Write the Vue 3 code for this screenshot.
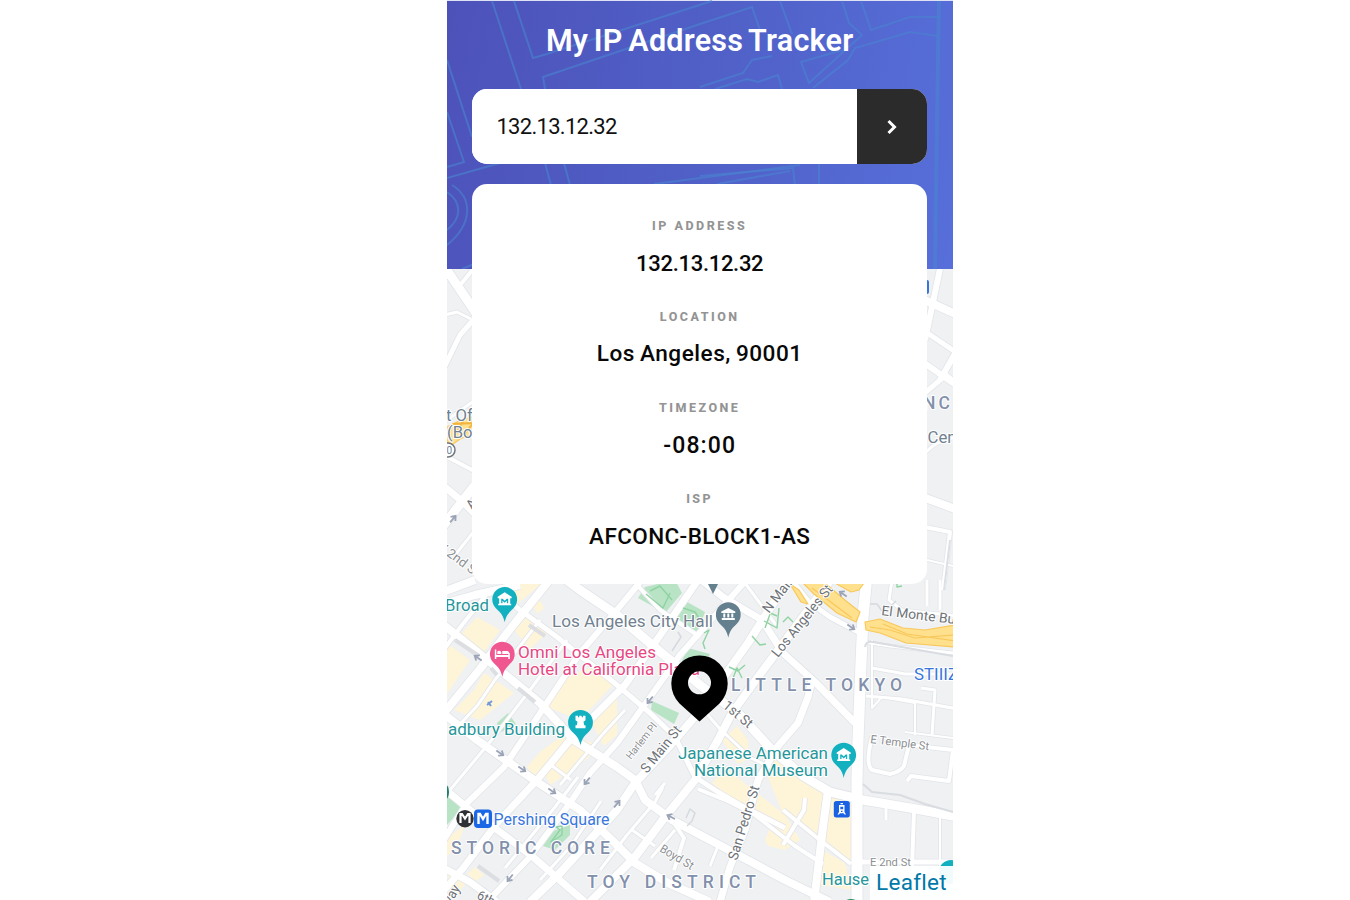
<script setup>
const details = [
  { label: 'IP ADDRESS', value: '132.13.12.32', key: 'ip' },
  { label: 'LOCATION', value: 'Los Angeles, 90001', key: 'loc' },
  { label: 'TIMEZONE', value: '-08:00', key: 'tz' },
  { label: 'ISP', value: 'AFCONC-BLOCK1-AS', key: 'isp' },
]

const headerLines = [
  'M492 1L521 89', 'M514 1L533 58L547 54L712 1', 'M545 89L543 77L700 24L752 7L760 30',
  'M447 60L472 137', 'M447 112L464 162L447 167', 'M447 178L500 163', 'M545 163L551 185', 'M564 163L570 185',
  'M654 184L800 165', 'M780 1L792 34', 'M700 87L743 73L752 60L772 56', 'M715 89L747 79L758 82L778 75L782 89',
  'M842 1L849 23L862 35L809 83L801 62L843 50', 'M861 1L871 30L910 17L939 17',
  'M813 88L848 60L855 48L910 32L938 36', 'M700 176L793 168L795 185', 'M717 184L790 171', 'M819 163V185',
  'M447 192C462 202 462 218 447 230', 'M452 185C473 198 473 224 447 245', 'M462 269L474 264',
]

const roads = [
  ['M430 730L480 669L507 633L556 572', 8], ['M440 846L467 803L504 767L527 733L580 653L617 610L650 570', 6],
  ['M440 895L464 867L497 823L537 780L570 740L625 685L652 647L698 580', 7],
  ['M487 902L530 857L570 803L590 773L617 743L648 700L680 655L718 612L748 578', 6],
  ['M530 902L560 873L590 840L617 810L635 783L675 740L698 713L748 643L788 580', 8],
  ['M590 902L635 857L665 817L695 780L718 740L732 713L758 677L785 641L832 578', 8],
  ['M720 902L730 867L745 830L758 780L778 746L798 723L808 697L812 680', 7],
  ['M828 790L823 827L814 902', 8], ['M867 575L863 617L861 663L858 740L857 780V902', 11],
  ['M556 572L580 590L617 615L658 650L700 685L740 715L770 748L803 776L830 792L863 800L916 809L958 817', 9],
  ['M500 594L520 610L557 637L617 685L650 713L675 737L695 777L718 792L740 805L785 828', 5],
  ['M440 622L490 662L540 703L574 740L617 767L635 780L645 800L672 820L725 848L785 880L830 902', 8],
  ['M440 711L477 740L537 782L580 810L617 845L635 863L668 883L710 902', 8],
  ['M440 785L470 810L507 837L533 857L585 902', 7], ['M440 866L470 882L497 902', 7],
  ['M628 575L660 610L700 637', 4], ['M695 575L723 597L762 620L783 653L816 683L858 726', 7],
  ['M790 578L809 602L830 617L864 635', 5], ['M440 605L475 595L520 585', 8],
  ['M440 655L462 625L490 590', 4], ['M540 620L517 650L495 680L477 706L450 735', 3],
  ['M567 640L530 690L490 742L450 790', 3], ['M560 785L602 735L625 710', 3], ['M505 868L555 807L578 777', 3],
  ['M540 880L571 846L601 801', 3], ['M600 870L627 835L655 802L663 787', 3], ['M551 765L571 780', 3],
  ['M864 642L890 646L953 653', 3], ['M872 668L905 674L958 674', 3], ['M866 696L902 699L958 709', 3],
  ['M872 640V708L882 697L915 703V735', 2], ['M921 688L935 690L932 735', 3], ['M905 732L953 738', 2],
  ['M872 737Q865 764 872 770L890 774Q900 772 904 766L909 745L953 750L949 781L911 776L907 781', 4],
  ['M886 804V820', 3], ['M914 811L912 868', 4], ['M940 816V868', 2], ['M857 862H953', 5],
  ['M783 810L820 840L851 864', 4], ['M783 845L804 810L805 798', 4], ['M698 789L730 802L755 815L795 846L823 864', 4],
  ['M672 820L684 838L674 870', 4], ['M684 828L718 846L710 866', 3], ['M651 858L675 830', 3],
  ['M655 795L665 783', 3], ['M632 830L655 846', 3], ['M745 583L776 625', 3], ['M695 700L720 729L751 758L782 773', 3],
  ['M440 260L478 316', 9], ['M461 284L475 267', 4], ['M440 376L460 335L475 318', 5],
  ['M440 316L457 312L471 319', 3], ['M440 425L475 400', 3], ['M440 483L463 502L475 514', 7],
  ['M440 530L475 485', 9], ['M440 453L478 473', 4], ['M455 555L475 530', 3], ['M440 593L475 580', 8],
  ['M925 340L940 269', 6], ['M920 298L960 316', 8], ['M920 328L960 355', 5], ['M940 380L960 345', 6],
  ['M920 360L960 388', 6], ['M920 397L946 375L958 385', 5], ['M926 452Q937 440 957 437', 3],
  ['M920 496L958 510', 8], ['M920 526L950 532L943 590', 4],
  ['M927 560L953 566', 2], ['M892 580L889 600L902 610L958 616', 3], ['M927 580V606', 3], ['M940 580V610', 3],
]

const yellow = [
  '460,635 477,617 500,630 484,652', '500,584 541,584 514,607 498,594', '447,643 470,660 447,694',
  '514,630 524,616 547,633 530,649', '474,690 484,673 514,693 480,720 454,710', '544,706 564,677 590,668 614,684 580,720',
  '590,720 617,697 617,735 604,746', '527,767 540,752 563,735 594,743 594,753 564,777 557,770 537,783',
  '712,783 725,768 785,815 800,840 785,850 768,846 765,840 772,823 752,818 735,803',
  '722,740 737,726 748,740 748,759 738,764', '763,764 783,759 826,793 816,837 783,815',
  '829,793 854,797 851,860 825,848', '824,851 845,863 853,890 820,885', '447,838 465,825 457,847 447,856',
  '448,870 466,884 450,900 447,900', '467,874 475,867 484,875 476,881', '545,773 552,767 562,777 550,785',
  '533,605 540,600 544,608 537,614',
]
const green = [
  '645,587 675,580 682,593 665,613 638,598', '680,598 705,612 696,637 673,620', '688,648 710,654 704,670 680,665',
  '652,701 679,713 674,724 651,710', '447,796 462,808 447,825', '543,846 553,831 570,825 570,835 555,850',
  '497,723 508,713 516,724 499,733', '447,827 455,829 447,838',
]

const labels = [
  { t: 'Broad', x: 445, y: 611, w: 44, s: 16.5, c: 'teal' },
  { t: 'Los Angeles City Hall', x: 552, y: 627, w: 161, s: 16.5, c: 'slate' },
  { t: 'Omni Los Angeles', x: 518, y: 657.5, w: 138, s: 16.5, c: 'pink' },
  { t: 'Hotel at California Plaza', x: 518, y: 674.5, w: 182, s: 16.5, c: 'pink' },
  { t: 'adbury Building', x: 448, y: 734.5, w: 117, s: 16.5, c: 'teal' },
  { t: 'Japanese American', x: 678, y: 759, w: 150, s: 16.5, c: 'teal' },
  { t: 'National Museum', x: 694, y: 776, w: 134, s: 16.5, c: 'teal' },
  { t: 'Pershing Square', x: 493.5, y: 824.5, w: 116, s: 16, c: 'blue' },
  { t: 'STIIIZ', x: 914, y: 679.5, w: 44, s: 17, c: 'blue' },
  { t: 'Hause', x: 822, y: 884.5, w: 47, s: 16, c: 'teal' },
  { t: 'LITTLE TOKYO', x: 731, y: 690.5, w: 171, s: 17.5, c: 'area' },
  { t: 'STORIC CORE', x: 451, y: 854, w: 159, s: 17.5, c: 'area' },
  { t: 'TOY DISTRICT', x: 587, y: 888, w: 169, s: 17.5, c: 'area' },
  { t: 'NC', x: 923, y: 408.5, w: 27, s: 17.5, c: 'area' },
  { t: 'Center', x: 927.5, y: 442.5, w: 49, s: 16, c: 'slate' },
  { t: 't Office', x: 446, y: 420.5, w: 53, s: 16, c: 'slate' },
  { t: '(Bow', x: 447, y: 437.5, w: 38, s: 16, c: 'slate' },
  { t: 'N Main', x: 769, y: 614, w: 43, s: 14, c: 'street', r: -52 },
  { t: 'Los Angeles St', x: 778, y: 658, w: 88, s: 14, c: 'street', r: -51 },
  { t: 'S Main St', x: 647, y: 774, w: 56, s: 14, c: 'street', r: -51 },
  { t: 'Harlem Pl', x: 631, y: 760, w: 43, s: 10.5, c: 'faint', r: -52 },
  { t: '1st St', x: 722, y: 707, w: 34, s: 14, c: 'street', r: 40 },
  { t: 'San Pedro St', x: 737, y: 861, w: 77, s: 14, c: 'street', r: -73 },
  { t: 'Boyd St', x: 659, y: 851, w: 37, s: 12, c: 'faint', r: 31 },
  { t: 'El Monte Busway', x: 881, y: 615, w: 106, s: 13.5, c: 'street', r: 7 },
  { t: 'E Temple St', x: 870, y: 743, w: 59, s: 11.5, c: 'faint', r: 7 },
  { t: 'E 2nd St', x: 870, y: 866, w: 41, s: 11.5, c: 'faint', r: 0 },
  { t: '6th', x: 476, y: 898, w: 18, s: 13, c: 'street', r: 27 },
  { t: 'way', x: 449, y: 908, w: 23, s: 14, c: 'street', r: -60 },
  { t: 'W 2nd St', x: 434, y: 546, w: 52, s: 13, c: 'faint', r: 37 },
  { t: 'A', x: 472, y: 510, w: 9, s: 13, c: 'street', r: -51 },
]
const arrows = [
  [478, 658, 215], [500, 753, 35], [522, 769, 35], [552, 791, 35], [587, 781, 128], [510, 878, 128],
  [671, 817, 207], [650, 700, 128], [843, 594, 215], [851, 627, 35], [453, 519, -50], [617, 804, -50],
]
</script>

<template>
  <main class="tracker">
    <header class="hero">
      <svg class="hero-art" viewBox="447 0 506 269" aria-hidden="true">
        <path v-for="(d, i) in headerLines" :key="i" :d="d" />
        <path class="wide" d="M939 1L937 120L935 269" />
      </svg>
      <h1>My IP Address Tracker</h1>
      <form class="search" @submit.prevent>
        <input value="132.13.12.32" aria-label="IP address" />
        <button aria-label="Search">
          <svg width="12" height="16" viewBox="0 0 12 16"><path d="M2.5 2L8.5 8L2.5 14" /></svg>
        </button>
      </form>
    </header>

    <section class="card">
      <div v-for="d in details" :key="d.key" class="item" :class="d.key">
        <h2><span>{{ d.label }}</span></h2>
        <p><span>{{ d.value }}</span></p>
      </div>
    </section>

    <section class="map">
      <svg class="canvas" viewBox="447 269 506 631">
        <defs>
          <path id="pin" d="M0 23C-1.5 16 -3.5 14 -9 8.6A12.4 12.4 0 1 1 9 8.6C3.5 14 1.5 16 0 23Z" />
          <g id="museum" fill="#fff">
            <path fill-rule="evenodd" d="M-7-2.5L0-7L7-2.5V-1H-7ZM-5.5-1H5.5V5H-5.5ZM-3.5 4V-.5H-2L0 1.5L2-.5H3.5V4H2.2V1.5L0 3.5L-2.2 1.5V4Z" />
            <path d="M-6.5 4.5H6.5V6H-6.5Z" />
          </g>
        </defs>
        <rect x="447" y="269" width="506" height="631" fill="#eff1f3" />
        <polygon v-for="(p, i) in yellow" :key="'y' + i" :points="p" fill="#fef4d8" />
        <polygon v-for="(p, i) in green" :key="'g' + i" :points="p" fill="#b9e3c5" />
        <g fill="none" stroke-linejoin="round">
          <path v-for="([d, w], i) in roads" :key="'e' + i" :d="d" stroke="#e2e5e9" :stroke-width="w + 1.6" />
          <path v-for="([d, w], i) in roads" :key="'r' + i" :d="d" stroke="#fff" :stroke-width="w" />
          <path d="M865 647Q866 641 873 642L953 656M863 784L872 792L900 795L925 804L953 812" stroke="#d9dce0" stroke-width="2" />
          <path d="M518 688L535 702M491 668L497 675M478 866L499 881M529 625L545 636M455 640L479 656" stroke="#dcdee1" stroke-width="4" />
          <path d="M950 540L944 590" stroke="#dcdfe4" stroke-width="2" />
          <path d="M650 591L660 586L672 600M683 608L695 612L702 623M646 594L663 608L670 593M704 633L709 630L703 643L705 649M729 667L738 671L745 665M733 678L737 668L742 678M752 636L760 645L766 644M764 621L777 628L779 608M768 612L777 616M765 628L770 614M783 622L788 617L793 622M551 842L560 830L556 827L562 826V835ZM897 583V587L902 586" stroke="#8fd3a2" stroke-width="1.4" />
          <path d="M672 651L681 637L678 632M686 818L690 809L695 813L692 821L687 826M891 606L896 601M870 604L877 604L882 611" stroke="#d6d9dd" stroke-width="1.5" />
        </g>
        <g fill="#ffe08c" stroke="#f8c85c" stroke-width="1.2" stroke-linejoin="round">
          <path d="M803 583H825L846 601L860 612L856 622L837 613L814 594Z" />
          <path d="M790 584L799 590L808 604L801 602Z" />
          <path d="M835 583H864L859 590L851 592Z" />
          <path d="M865 622L880 619L903 628L925 630L955 625V647L906 643L880 633L866 630Z" />
          <path d="M812 588L832 603L852 618M870 627L890 630L915 638L955 635M883 624L907 634L955 641" fill="none" />
          <path d="M447 427L459 421L475 416V433L460 439L450 446L447 440Z" />
          <path d="M452 424L475 423M456 434L463 421M464 435L474 422" fill="none" stroke="#f2b33f" stroke-width="2" />
        </g>
        <path v-for="([x, y, r], i) in arrows" :key="'a' + i" :transform="`translate(${x} ${y}) rotate(${r})`" d="M-4.5 0H3M0-3.2L4 0L0 3.2" fill="none" stroke="#9ba3b7" stroke-width="1.8" />
        <path d="M487 705L492 701M488 702L491 706" stroke="#7199d8" stroke-width="2" />

        <text
          v-for="(l, i) in labels" :key="'t' + i" :class="l.c" :font-size="l.s" :textLength="l.w"
          :lengthAdjust="l.c === 'area' ? 'spacing' : 'spacingAndGlyphs'"
          :transform="`translate(${l.x} ${l.y}) rotate(${l.r || 0})`"
        >{{ l.t }}</text>

        <circle cx="448" cy="450" r="7" fill="#fff" stroke="#70757a" stroke-width="1.5" />
        <text class="slate" x="446.5" y="454" font-size="10">0</text>
        <rect x="920" y="280" width="9" height="14" rx="2" fill="#3b73d8" />

        <g transform="translate(504.7 599.3)"><use href="#pin" fill="#13b0c0" /><use href="#museum" /></g>
        <g transform="translate(843.7 755)"><use href="#pin" fill="#13b0c0" /><use href="#museum" /></g>
        <g transform="translate(580.5 722.3)">
          <use href="#pin" fill="#13b0c0" />
          <path d="M-5-6.5H-2.5V-5H-1.2V-6.5H1.2V-5H2.5V-6.5H5V-2L3-.5L3.7 3H5V6H-5V3H-3.7L-3-.5L-5-2Z" fill="#fff" />
        </g>
        <g transform="translate(502.3 654)">
          <use href="#pin" fill="#f0568f" />
          <path d="M-7.5-4.5H-6V1H6V-1H7.5V5H6V3H-6V5H-7.5ZM-5-2.5Q-3-4-1-2V0H-5ZM0-3H5Q7-3 7-.5V0H0Z" fill="#fff" />
        </g>
        <g transform="translate(728.3 614.6)">
          <use href="#pin" fill="#647f8e" />
          <path d="M-7-3L0-6.5L7-3V-1.5H-7ZM-5-1H-3V3H-5ZM-1-1H1V3H-1ZM3-1H5V3H3ZM-6.5 3.5H6.5V5.5H-6.5Z" fill="#fff" />
        </g>
        <path d="M706 580H720L713 594Z" fill="#647f8e" />

        <circle cx="465" cy="818.7" r="8.7" fill="#303134" />
        <path d="M460.5 823V814H462L465 818.5L468 814H469.5V823" fill="none" stroke="#fff" stroke-width="2.2" />
        <rect x="474" y="809.5" width="18" height="18.5" rx="4" fill="#1a68e6" />
        <path d="M478.5 824V814H480L483 819L486 814H487.5V824" fill="none" stroke="#fff" stroke-width="2.4" />
        <rect x="833.8" y="801" width="16" height="16.5" rx="2.5" fill="#1a62e3" />
        <path fill-rule="evenodd" d="M839 805H844.5V812L846 814.5H844.5L843.5 813.3H840L839 814.5H837.5L839 812ZM840.3 806.8V809.3H843.2V806.8ZM840.5 803H843V804.3H840.5ZM841 810.8V812H842.5V810.8Z" fill="#fff" />
        <ellipse cx="446" cy="792" rx="3" ry="7" fill="#21806b" />
        <circle cx="951" cy="872" r="12" fill="#13b0c0" />
        <circle cx="851" cy="909" r="10" fill="#21925a" />

        <path fill-rule="evenodd" d="M699.5 721.5L679.5 703.5A28.2 28.2 0 1 1 719.5 703.5ZM699.5 671.3A11.5 11.5 0 1 0 699.5 694.3A11.5 11.5 0 1 0 699.5 671.3Z" />
      </svg>
      <a class="credit"><span>Leaflet</span></a>
    </section>
  </main>
</template>

<style>
body { background: #fff; }
</style>
<style scoped>
* { box-sizing: border-box; }
.tracker {
  display: grid;
  grid-template-rows: 269px 631px;
  width: 506px;
  height: 900px;
  margin-left: 447px;
  overflow: hidden;
  font-family: Roboto, "Liberation Sans", sans-serif;
}
.hero {
  grid-area: 1 / 1;
  position: relative;
  padding: 0 26px 0 25.4px;
  border-top: 1px solid #dfe2f5;
  background: linear-gradient(100deg, #4d52b9 0%, #5060c7 50%, #576fda 100%);
}
.hero-art { position: absolute; left: 0; top: -1px; width: 506px; height: 269px; }
.hero-art path { fill: none; stroke: #4a83d0; stroke-width: 2; opacity: .62; }
.hero-art .wide { stroke-width: 4; }
h1 {
  position: relative;
  margin: 0;
  padding-top: 21px;
  height: 88px;
  text-align: center;
  color: #fff;
  font-size: 30.5px;
  line-height: 38px;
  font-weight: 600;
  letter-spacing: .25px;
  word-spacing: -2.2px;
  white-space: nowrap;
}
.search { position: relative; display: flex; height: 75px; border-radius: 15px; overflow: hidden; background: #fff; }
input {
  flex: 1;
  min-width: 0;
  padding: 0 24px;
  border: 0;
  font: 400 22px Roboto, sans-serif;
  letter-spacing: -.7px;
  color: #111;
}
button { display: grid; place-items: center; width: 70px; padding: 0; border: 0; background: #2b2b2b; }
button path { fill: none; stroke: #fff; stroke-width: 3; }
.card {
  grid-area: 1 / 1 / 3 / 2;
  z-index: 2;
  width: 454.6px;
  height: 399.6px;
  margin: 184.4px 0 0 25.4px;
  padding-top: 31.6px;
  border-radius: 15px;
  background: #fff;
  text-align: center;
}
.item { height: 91px; }
h2 { margin: 0; color: #949494; font-size: 12.5px; line-height: 20px; font-weight: 800; letter-spacing: 2.5px; }
p { margin: 12px 0 0; color: #080808; font-size: 22px; line-height: 31px; font-weight: 500; }
.ip p { letter-spacing: -.3px; }
.loc p { letter-spacing: .5px; word-spacing: -1px; font-size: 22.6px; line-height: 30px; }
.tz p { letter-spacing: 1.1px; font-size: 23px; }
.isp p { letter-spacing: .4px; font-size: 22.5px; }
.map { grid-area: 2 / 1; position: relative; overflow: hidden; }
.canvas { display: block; width: 506px; height: 631px; }
.canvas text { font-family: Roboto, sans-serif; paint-order: stroke; stroke: #fff; stroke-width: 2px; stroke-linejoin: round; }
.canvas .teal { fill: #26969b; }
.canvas .slate { fill: #71818f; }
.canvas .pink { fill: #e64884; }
.canvas .blue { fill: #3876dc; }
.canvas .area { fill: #8290ab; font-weight: 500; }
.canvas .street { fill: #6e7277; }
.canvas .faint { fill: #8c8f93; }
.credit {
  position: absolute;
  right: 0;
  bottom: 0;
  width: 83px;
  height: 34px;
  padding-left: 6px;
  background: rgba(255, 255, 255, .94);
  color: #0078a8;
  font-size: 22.5px;
  line-height: 32px;
  letter-spacing: .3px;
}
</style>
